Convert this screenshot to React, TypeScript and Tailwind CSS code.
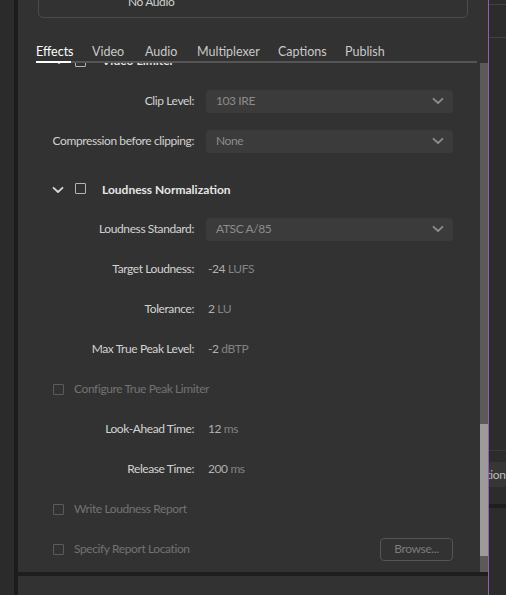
import React from 'react';

const Chevron = ({ className }: { className?: string }) => (
  <svg viewBox="0 0 12 8" className={className} fill="none">
    <path d="M1.5 1.8 L6 6 L10.5 1.8" stroke="currentColor" strokeWidth="1.8" strokeLinecap="round" strokeLinejoin="round" />
  </svg>
);

const Dropdown = ({ value }: { value: string }) => (
  <div className="flex items-center justify-between w-[247px] h-[23px] rounded-[4px] bg-[#3b3b3b] pl-[10px] pr-[9px] text-[#8c8c8c]">
    <span>{value}</span>
    <Chevron className="w-[12px] h-[8px] text-[#8c8c8c]" />
  </div>
);

const Box = ({ light }: { light?: boolean }) => (
  <div
    className={
      light
        ? 'w-[11px] h-[11px] border-[1.5px] border-[#b4b4b4] rounded-[1px]'
        : 'w-[11px] h-[11px] border-[1.5px] border-[#5c5c5c] rounded-[1px]'
    }
  />
);

const Row = ({ label, children }: { label: string; children: React.ReactNode }) => (
  <div className="flex items-center h-[40px]">
    <div className="w-[176px] text-right text-[#d2d2d2] whitespace-nowrap">{label}</div>
    <div className="ml-[12px]">{children}</div>
  </div>
);

const Value = ({ num, unit }: { num: string; unit: string }) => (
  <span className="pl-[2px]">
    <span className="text-[#b0b0b0]">{num}</span>
    <span className="text-[#838383]"> {unit}</span>
  </span>
);

const CheckRow = ({ label, children }: { label: string; children?: React.ReactNode }) => (
  <div className="flex items-center h-[40px] pl-[35px] pr-[27px]">
    <Box />
    <span className="ml-[10px] text-[#727272]">{label}</span>
    <div className="ml-auto">{children}</div>
  </div>
);

const tabs = [
  { name: 'Effects', w: 'w-[56px]' },
  { name: 'Video', w: 'w-[53px]' },
  { name: 'Audio', w: 'w-[52px]' },
  { name: 'Multiplexer', w: 'w-[81px]' },
  { name: 'Captions', w: 'w-[67px]' },
  { name: 'Publish', w: 'w-[50px]' },
];

export default function App() {
  return (
    <div
      className="flex w-[506px] h-[595px] overflow-hidden bg-[#323232] text-[12px] leading-none tracking-[-0.4px]"
      style={{ fontFamily: 'Lato, "Open Sans", sans-serif' }}
    >
      {/* left strip */}
      <div className="w-[14px] bg-[#2b2b2b]" />
      <div className="w-[4px] bg-[#1c1c1c]" />

      {/* main panel */}
      <div className="flex flex-col w-[470px] h-full">
        <div className="mx-[20px] -mt-[22px] h-[40px] border border-[#4c4c4c] rounded-[5px] flex items-start">
          <span className="ml-[89px] mt-[17px] text-[#cfcfcf]">No Audio</span>
        </div>

        {/* tabs */}
        <div className="relative z-10 mt-[22px] ml-[18px] mr-[11px] h-[23px] flex items-start text-[12.5px] tracking-normal bg-[#323232]">
          <div className="absolute left-0 right-0 bottom-0 h-[2px] bg-[#555555]" />
          {tabs.map((t, i) => (
            <div
              key={t.name}
              className={
                i === 0
                  ? `relative h-full pt-[6px] ${t.w} text-white`
                  : `relative h-full pt-[6px] ${t.w} text-[#c9c9c9]`
              }
            >
              {t.name}
              {i === 0 && <div className="absolute left-0 bottom-0 w-[35px] h-[2px] bg-white" />}
            </div>
          ))}
        </div>

        {/* scroll area */}
        <div className="flex flex-1 min-h-0">
          <div className="flex-1 overflow-hidden">
            <div className="-mt-[22px]">
              <div className="flex items-center h-[40px] pl-[35px]">
                <Chevron className="w-[12px] h-[8px] text-[#d8d8d8]" />
                <div className="ml-[10px]"><Box light /></div>
                <span className="ml-[16px] font-bold tracking-normal text-[#e6e6e6]">Video Limiter</span>
              </div>
              <Row label="Clip Level:"><Dropdown value="103 IRE" /></Row>
              <Row label="Compression before clipping:"><Dropdown value="None" /></Row>

              <div className="flex items-center h-[39px] mt-[9px] pl-[34px]">
                <Chevron className="w-[12px] h-[8px] text-[#d8d8d8]" />
                <div className="ml-[11px] -mt-[2px]"><Box light /></div>
                <span className="ml-[16px] font-bold tracking-normal text-[#e6e6e6]">Loudness Normalization</span>
              </div>

              <Row label="Loudness Standard:"><Dropdown value="ATSC A/85" /></Row>
              <Row label="Target Loudness:"><Value num="-24" unit="LUFS" /></Row>
              <Row label="Tolerance:"><Value num="2" unit="LU" /></Row>
              <Row label="Max True Peak Level:"><Value num="-2" unit="dBTP" /></Row>
              <CheckRow label="Configure True Peak Limiter" />
              <Row label="Look-Ahead Time:"><Value num="12" unit="ms" /></Row>
              <Row label="Release Time:"><Value num="200" unit="ms" /></Row>
              <CheckRow label="Write Loudness Report" />
              <CheckRow label="Specify Report Location">
                <div className="w-[73px] h-[23px] border border-[#555555] rounded-[4px] flex items-center justify-center text-[#7c7c7c]">
                  Browse...
                </div>
              </CheckRow>
            </div>
          </div>

          {/* scrollbar */}
          <div className="w-[8px] flex flex-col bg-[#5a5a5a]">
            <div className="h-[361px]" />
            <div className="h-[132px] bg-[#9b9b9b]" />
          </div>
        </div>

        <div className="h-[4px] bg-[#1e1e1e]" />
        <div className="h-[19px] bg-[#323232]" />
      </div>

      {/* purple divider */}
      <div className="w-[1px] bg-[#9a58b8]" />

      {/* right panel */}
      <div className="flex-1 flex flex-col bg-[#2c2c2c] overflow-hidden">
        <div className="mt-[4px] h-[1px] bg-[#424242]" />
        <div className="mt-[32px] h-[1px] bg-[#424242]" />
        <div className="mt-[412px] h-[1px] bg-[#3a3a3a]" />
        <div className="mt-[11px] h-[25px] bg-[#363636] flex items-center overflow-hidden whitespace-nowrap">
          <span className="-ml-[40px] text-[#bdbdbd]">Description</span>
        </div>
        <div className="mt-[17px] h-[4px] bg-[#1e1e1e]" />
      </div>
    </div>
  );
}
